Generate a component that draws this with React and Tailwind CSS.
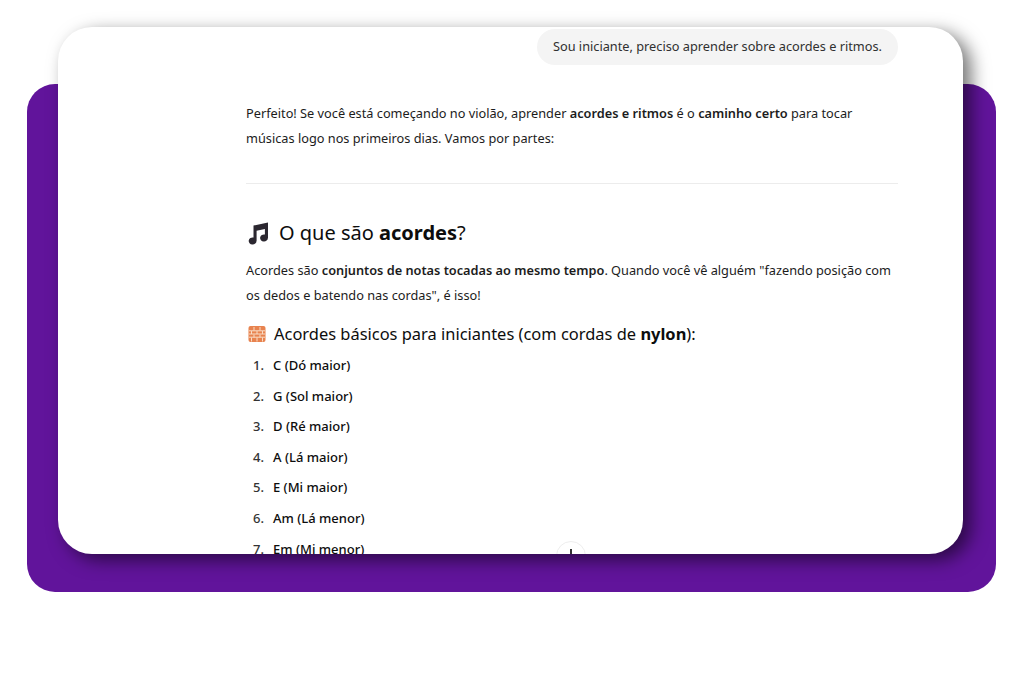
const chords = ['C (Dó maior)', 'G (Sol maior)', 'D (Ré maior)', 'A (Lá maior)', 'E (Mi maior)', 'Am (Lá menor)', 'Em (Mi menor)'];

function MusicIcon() {
  return (
    <svg viewBox="0 0 24 24" className="h-[24px] w-[24px] shrink-0 text-[#2b2730]" fill="currentColor">
      <path d="M7.500 4.500 22 1.500V17h-.1a3.900 3.500 0 1 1-3-3.400V8l-8.300 1.800V20h-.1a3.900 3.500 0 1 1-3-3.400z" />
    </svg>
  );
}

function BrickIcon() {
  return (
    <svg viewBox="0 0 18 18" className="h-[18px] w-[18px] shrink-0">
      <rect x="0.5" y="1" width="17" height="16" rx="2" fill="#e8834f" />
      <path d="M1 5.800h16M1 9h16M1 12.200h16M6 2v3.500M12 2v3.500M3.500 6v3M9 6v3M14.500 6v3M6 9.500v3M12 9.500v3M3.500 12.500v4M9 12.500v4M14.500 12.500v4" stroke="#f8dcc6" strokeWidth="1" />
    </svg>
  );
}

export default function App() {
  return (
    <div className="h-[692px] w-[1024px] overflow-hidden bg-white pt-[84px] pl-[27px] font-['Noto_Sans',sans-serif] text-[#0d0d0d]">
      <div className="h-[508px] w-[969px] rounded-[28px] bg-[#61149b]">
        {/* white chat card overlaps the top of the purple panel */}
        <div className="relative ml-[31px] h-[527px] w-[905px] -translate-y-[57px] overflow-hidden rounded-[34px] bg-white pt-[2px] pr-[65px] pl-[188px] shadow-[8px_6px_18px_rgba(0,0,0,0.55)]">
          <div className="flex justify-end">
            <div className="flex h-[36px] items-center rounded-full bg-[#f4f4f4] px-4 text-[12.750px] text-[#303030]">
              Sou iniciante, preciso aprender sobre acordes e ritmos.
            </div>
          </div>

          <p className="mt-[36px] text-[12.750px] leading-[25px] text-[#1c1c1c]">
            Perfeito! Se você está começando no violão, aprender <strong className="font-semibold">acordes e ritmos</strong> é o <strong className="font-semibold">caminho certo</strong> para tocar músicas logo nos primeiros dias. Vamos por partes:
          </p>

          <hr className="mt-[32px] border-[#ececec]" />

          <h2 className="mt-[34px] flex items-center gap-[9px] text-[20px] leading-[30px]">
            <MusicIcon />
            <span>O que são <strong>acordes</strong>?</span>
          </h2>

          <p className="mt-[10px] text-[12.750px] leading-[25px] text-[#1c1c1c]">
            Acordes são <strong className="font-semibold">conjuntos de notas tocadas ao mesmo tempo</strong>. Quando você vê alguém "fazendo posição com os dedos e batendo nas cordas", é isso!
          </p>

          <h3 className="mt-[12px] flex items-center gap-[8px] pl-[2px] text-[16.450px] leading-[28px]">
            <BrickIcon />
            <span>Acordes básicos para iniciantes (com cordas de <strong>nylon</strong>):</span>
          </h3>

          <ol className="mt-[2px] flex flex-col text-[13px] leading-[30.600px]">
            {chords.map((chord, idx) => (
              <li key={chord} className="flex">
                <span className="w-[27px] pl-[7px] font-medium text-[#333]">{idx + 1}.</span>
                <span className="font-medium">{chord}</span>
              </li>
            ))}
          </ol>

          {/* scroll to bottom button, cut off by the card */}
          <div className="absolute top-[514px] left-[498px] flex h-[30px] w-[30px] items-start justify-center rounded-full border border-[#eeeeee] bg-white pt-[7px]">
            <div className="h-[18px] w-[1.500px] bg-[#333]" />
          </div>
        </div>
      </div>
    </div>
  );
}
